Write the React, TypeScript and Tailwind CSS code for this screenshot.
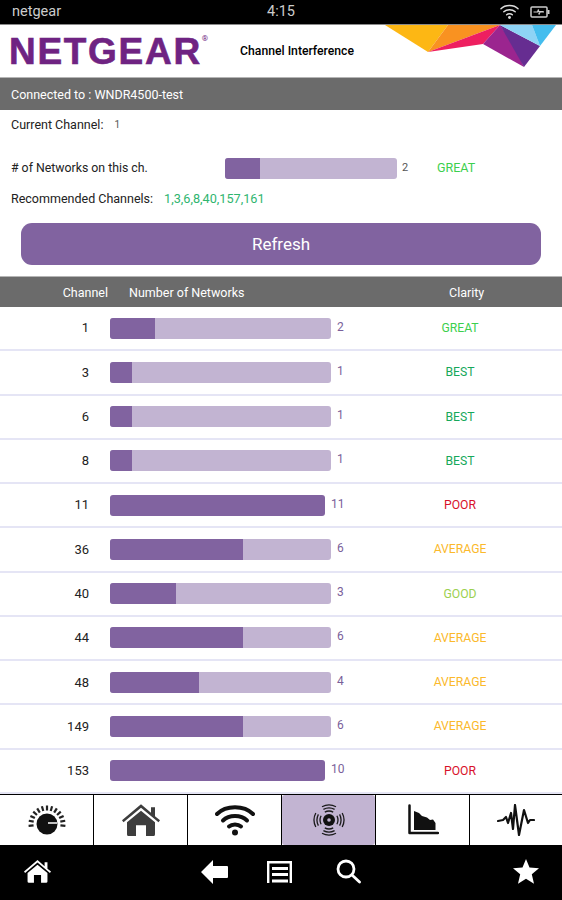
const channels = [
  { ch: 1, count: 2, fill: 45, clarity: 'GREAT', color: 'text-[#3ccf4e]' },
  { ch: 3, count: 1, fill: 22, clarity: 'BEST', color: 'text-[#17a85a]' },
  { ch: 6, count: 1, fill: 22, clarity: 'BEST', color: 'text-[#17a85a]' },
  { ch: 8, count: 1, fill: 22, clarity: 'BEST', color: 'text-[#17a85a]' },
  { ch: 11, count: 11, fill: 215, clarity: 'POOR', color: 'text-[#d8112a]', full: true },
  { ch: 36, count: 6, fill: 133, clarity: 'AVERAGE', color: 'text-[#fbb92b]' },
  { ch: 40, count: 3, fill: 66, clarity: 'GOOD', color: 'text-[#9bd04f]' },
  { ch: 44, count: 6, fill: 133, clarity: 'AVERAGE', color: 'text-[#fbb92b]' },
  { ch: 48, count: 4, fill: 89, clarity: 'AVERAGE', color: 'text-[#fbb92b]' },
  { ch: 149, count: 6, fill: 133, clarity: 'AVERAGE', color: 'text-[#fbb92b]' },
  { ch: 153, count: 10, fill: 215, clarity: 'POOR', color: 'text-[#d8112a]', full: true },
];

const GaugeIcon = () => (
  <svg width="40" height="32" viewBox="0 0 40 32">
    {[-96, -80, -64, -48, -32, -16, 0, 16, 32, 48, 64, 80, 96].map((a) => (
      <rect key={a} x="18.900" y="1.500" width="2.200" height="5" fill="#222" transform={`rotate(${a} 20 20)`} />
    ))}
    <circle cx="20" cy="20" r="10.500" fill="#111" />
    <path d="M21 19h9" stroke="#fff" strokeWidth="1.500" />
  </svg>
);

const HomeIcon = ({ color, w = 38 }: { color: string; w?: number }) => (
  <svg width={w} height={w * 0.85} viewBox="0 0 38 32" fill={color}>
    <path d="M19 0 L29 8.500 V3 H33 V12 L38 16 L36.500 18 L19 3.500 L1.500 18 L0 16 Z" />
    <path d="M19 6.500 L33 18 V30 Q33 32 31 32 H24 V21 H14 V32 H7 Q5 32 5 30 V18 Z" />
  </svg>
);

const WifiIcon = ({ color, w = 40, sw = 4 }: { color: string; w?: number; sw?: number }) => (
  <svg width={w} height={w * 0.8} viewBox="0 0 40 32" fill="none" stroke={color} strokeWidth={sw} strokeLinecap="round">
    <path d="M2 10 C11 1 29 1 38 10" />
    <path d="M8 16.500 C14 10.500 26 10.500 32 16.500" />
    <path d="M14 22.500 C17 19.800 23 19.800 26 22.500" />
    <circle cx="20" cy="28.500" r="3" fill={color} stroke="none" />
  </svg>
);

const RadarIcon = () => (
  <svg width="32" height="32" viewBox="0 0 32 32" fill="none" stroke="#1a1a1a" strokeWidth="1.300">
    <circle cx="16" cy="16" r="6" fill="#111" stroke="none" />
    <circle cx="16" cy="16" r="1.800" fill="#c2b4d2" stroke="none" />
    {[0, 90, 180, 270].map((a) => (
      <path
        key={a}
        transform={`rotate(${a} 16 16)`}
        d="M11.800 8.100A9 9 0 0 1 20.200 8.100M10.400 5.400A12 12 0 0 1 21.600 5.400M9 2.800A15 15 0 0 1 23 2.800"
      />
    ))}
  </svg>
);

const ChartIcon = () => (
  <svg width="32" height="32" viewBox="0 0 32 32">
    <path d="M2.500 1.500 V29 H31" fill="none" stroke="#111" strokeWidth="2.500" strokeLinecap="round" strokeLinejoin="round" />
    <path d="M7 26 V7 L12 9 L15 12 L20 13.500 L23 16 L26 15.500 L28.500 19 V26 Z" fill="#111" />
  </svg>
);

const PulseIcon = () => (
  <svg width="38" height="32" viewBox="0 0 38 32" fill="none" stroke="#111" strokeWidth="2.200" strokeLinecap="round" strokeLinejoin="round">
    <path d="M1 17 L6 16 L9 13 L11 19 L14 9 L16 25 L18 1 L22 31 L27 6 L31 19 L33 16 L37 16" />
  </svg>
);

const BackIcon = () => (
  <svg width="27" height="24" viewBox="0 0 27 24" fill="#fff">
    <path d="M12 0 V6 H26 Q27 6 27 7 V17 Q27 18 26 18 H12 V24 L0 12 Z" />
  </svg>
);

const MenuIcon = () => (
  <svg width="25" height="22" viewBox="0 0 25 22" fill="none" stroke="#fff" strokeWidth="2.400">
    <path d="M1.200 22 V1.200 H23.800 V22" />
    <path d="M5 7.500 H21 M5 13.500 H21 M5 20 H21" strokeWidth="2.800" />
  </svg>
);

const SearchIcon = () => (
  <svg width="25" height="25" viewBox="0 0 25 25" fill="none" stroke="#fff" strokeWidth="2.800" strokeLinecap="round">
    <circle cx="10" cy="10" r="8" />
    <path d="M16 16 L23.500 23" />
  </svg>
);

const StarIcon = () => (
  <svg width="26" height="25" viewBox="0 0 26 25" fill="#fff">
    <path d="M13 0 L16.500 8.500 L26 9.300 L18.800 15.300 L21 24.800 L13 19.700 L5 24.800 L7.200 15.300 L0 9.300 L9.500 8.500 Z" />
  </svg>
);

const BatteryIcon = () => (
  <svg width="20" height="14" viewBox="0 0 20 14" fill="none">
    <rect x="1" y="2" width="16" height="10" rx="1" stroke="#ccc" strokeWidth="1.500" />
    <rect x="17.500" y="5" width="2" height="4" fill="#ccc" />
    <path d="M3.500 7h4l1-2.500v2h5M14 7h-4l-1 2.500v-2" stroke="#ccc" strokeWidth="1.200" />
  </svg>
);

const Bar = ({ fill, full, width }: { fill: number; full?: boolean; width: number }) => (
  <div className={`h-[21px] rounded-[3px] overflow-hidden ${full ? 'bg-[#8163a0]' : 'bg-[#c2b4d2]'}`} style={{ width: full ? fill : width }}>
    <div className="h-full bg-[#8163a0]" style={{ width: fill }} />
  </div>
);

const tabs = [
  <GaugeIcon key="gauge" />,
  <HomeIcon key="home" color="#3d3d3d" />,
  <WifiIcon key="wifi" color="#111" />,
  <RadarIcon key="radar" />,
  <ChartIcon key="chart" />,
  <PulseIcon key="pulse" />,
];

export default function App() {
  return (
    <div className="h-[900px] w-[562px] flex flex-col bg-white overflow-hidden font-['Roboto',sans-serif] text-[#222]">
      {/* status bar */}
      <div className="h-[25px] shrink-0 bg-black border-b border-[#8a8a8a] flex items-center justify-between pl-3 pr-[12px] relative">
        <span className="text-[#ccc] text-[14.500px]">netgear</span>
        <span className="absolute left-[267px] text-[#ccc] text-[14.500px]">4:15</span>
        <div className="flex items-center gap-[11px]">
          <WifiIcon color="#ddd" w={19} sw={3} />
          <BatteryIcon />
        </div>
      </div>

      {/* header */}
      <div className="h-[52px] shrink-0 relative flex items-center pl-[9px]">
        <span className="font-['Liberation_Sans',sans-serif] font-bold text-[37px] leading-none tracking-[1.700px] text-[#6f2382] [-webkit-text-stroke:0.6px_#6f2382]">NETGEAR</span>
        <span className="self-start mt-[10px] text-[#6f2382] text-[8px] leading-none">®</span>
        <span className="ml-[32px] mt-[1px] text-[12.200px] font-medium text-black">Channel Interference</span>
        <svg className="absolute left-[370px] top-0" width="192" height="45" viewBox="0 0 192 45">
          <polygon points="15,0 78,0 58,27" fill="#fdb714" />
          <polygon points="78,0 130,0 58,27" fill="#f99221" />
          <polygon points="130,0 113,19 58,27" fill="#ee1f60" />
          <polygon points="130,0 113,19 154,42 145,22" fill="#9b258f" />
          <polygon points="130,0 170,21 154,42" fill="#662d91" />
          <polygon points="130,0 162,0 170,21" fill="#8ed3f5" />
          <polygon points="162,0 186,0 170,21" fill="#44bdee" />
        </svg>
      </div>

      {/* connected bar */}
      <div className="h-[33px] shrink-0 bg-[#6b6b6b] border-t border-[#b5b5b5] flex items-center pl-[11px] pt-[2px] text-white text-[12.500px]">
        Connected to : WNDR4500-test
      </div>

      {/* summary */}
      <div className="h-[166px] shrink-0 flex flex-col text-[12.500px]">
        <div className="pl-[11px] pt-[6px] h-[42px] flex items-start gap-[11px]">
          <span>Current Channel:</span>
          <span className="text-[10px] text-[#555] mt-[1px]">1</span>
        </div>
        <div className="pl-[11px] h-[32px] flex items-center">
          <span className="w-[214px] text-[12.300px]">&#35; of Networks on this ch.</span>
          <div className="h-[21px] w-[172px] rounded-[3px] bg-[#c2b4d2] overflow-hidden">
            <div className="h-full w-[35px] bg-[#8163a0]" />
          </div>
          <span className="ml-[5px] text-[11px] text-[#555] w-[35px]">2</span>
          <span className="text-[#3ccf4e]">GREAT</span>
        </div>
        <div className="pl-[11px] mt-[3px] h-[24px] flex items-center gap-[11px]">
          <span>Recommended Channels:</span>
          <span className="text-[#2fb56f] text-[12.700px]">1,3,6,8,40,157,161</span>
        </div>
        <button className="mx-[21px] mt-[12px] h-[42px] shrink-0 rounded-[11px] bg-[#8163a0] text-white text-[17px] pt-[2px]">Refresh</button>
      </div>

      {/* table header */}
      <div className="h-[31px] shrink-0 bg-[#6b6b6b] border-t border-[#b5b5b5] flex items-center pt-[2px] text-white text-[12.500px]">
        <span className="w-[108px] text-right">Channel</span>
        <span className="ml-[21px] w-[320px]">Number of Networks</span>
        <span>Clarity</span>
      </div>

      {/* channel rows */}
      <div className="flex-1 flex flex-col min-h-0">
        {channels.map((row) => (
          <div key={row.ch} className="flex-1 flex items-center border-b-2 border-[#e5e5f5]">
            <span className="w-[89px] text-right text-[13px]">{row.ch}</span>
            <div className="ml-[21px] w-[221px]">
              <Bar fill={row.fill} full={row.full} width={221} />
            </div>
            <span className={`w-[26px] text-[12px] text-[#7a5f9a] -mt-[3px] ${row.full ? '' : 'pl-[6px]'}`}>{row.count}</span>
            <div className={`flex-1 text-center pl-[1px] text-[12.200px] ${row.color}`}>{row.clarity}</div>
          </div>
        ))}
      </div>

      {/* tab bar */}
      <div className="h-[51px] shrink-0 grid grid-cols-[94px_94px_94px_94px_94px_92px] border-t border-black">
        {tabs.map((icon, i) => (
          <div key={i} className={`border-black ${i < 5 ? 'border-r' : ''}`}>
            <div className={`h-full flex items-center justify-center ${i === 3 ? 'bg-[#c2b4d2] rounded-[3px]' : ''}`}>
              {icon}
            </div>
          </div>
        ))}
      </div>

      {/* nav bar */}
      <div className="h-[55px] shrink-0 bg-black flex items-center pb-[2px]">
        <div className="ml-[24px]"><HomeIcon color="#fff" w={27} /></div>
        <div className="ml-[150px]"><BackIcon /></div>
        <div className="ml-[39px]"><MenuIcon /></div>
        <div className="ml-[44px]"><SearchIcon /></div>
        <div className="ml-[152px]"><StarIcon /></div>
      </div>
    </div>
  );
}
